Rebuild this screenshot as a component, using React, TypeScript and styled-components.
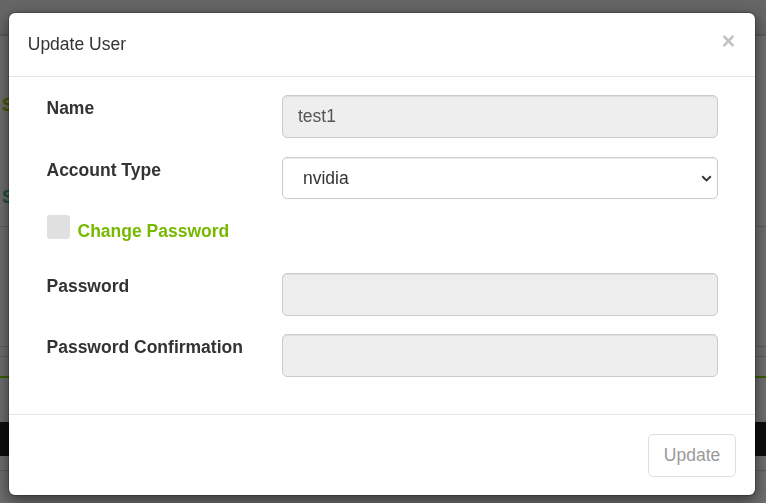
import React from "react";
import styled, { createGlobalStyle } from "styled-components";

const Global = createGlobalStyle`
  html, body { margin: 0; padding: 0; }
  body {
    font-family: "Liberation Sans", Arial, sans-serif;
    overflow: hidden;
    background: #dedede;
  }
  * { box-sizing: border-box; }
`;

/* ---------- page behind the modal ---------- */
const Page = styled.div`
  width: 766px;
  height: 503px;
  display: flex;
  flex-direction: column;
  background: #dedede;
`;
const TopBar = styled.div`
  height: 36px;
  background: #cdcdcd;
  border-bottom: 2px solid #b6b6b6;
  flex: none;
`;
const PageText = styled.div<{ $top: number; $color: string }>`
  margin-top: ${(p) => p.$top}px;
  padding-left: 2px;
  height: 14px;
  font-size: 18px;
  line-height: 14px;
  font-weight: bold;
  color: ${(p) => p.$color};
  flex: none;
`;
const PageLine = styled.div<{ $top: number; $color?: string; $h?: number }>`
  margin-top: ${(p) => p.$top}px;
  height: ${(p) => p.$h ?? 1}px;
  background: ${(p) => p.$color ?? "#b9b9b9"};
  flex: none;
`;

/* ---------- overlay & modal ---------- */
const Overlay = styled.div`
  position: fixed;
  inset: 0;
  background: rgba(0, 0, 0, 0.5);
  padding: 12px 0 0 8px;
`;
const Modal = styled.div`
  width: 748px;
  background: #fff;
  border: 1px solid rgba(0, 0, 0, 0.2);
  border-radius: 7px;
  box-shadow: 0 5px 15px rgba(0, 0, 0, 0.5);
  background-clip: padding-box;
`;
const Header = styled.div`
  padding: 18.75px;
  border-bottom: 1px solid #e5e5e5;
  display: flex;
  align-items: center;
  justify-content: space-between;
`;
const Title = styled.h4`
  margin: 0;
  font-size: 17.5px;
  line-height: 25px;
  font-weight: normal;
  color: #333;
`;
const Close = styled.button`
  border: 0;
  background: transparent;
  padding: 0;
  margin: -5px 1px 0 0;
  font-family: "Liberation Sans", Arial, sans-serif;
  font-size: 23px;
  font-weight: bold;
  line-height: 25px;
  color: #c2c2c2;
  cursor: pointer;
`;
const Body = styled.div`
  padding: 18.75px;
`;
const Row = styled.div`
  display: grid;
  grid-template-columns: 235.5px 1fr;
  padding: 0 18.75px;
  margin-bottom: 18.75px;
`;
const Label = styled.label`
  font-size: 17.5px;
  line-height: 25px;
  font-weight: bold;
  color: #333;
  padding-top: 1px;
`;
const Input = styled.input<{ $disabled?: boolean }>`
  height: 42.5px;
  width: 100%;
  padding: 0 15px;
  font-family: "Liberation Sans", Arial, sans-serif;
  font-size: 17.5px;
  color: #555;
  background: ${(p) => (p.$disabled ? "#eeeeee" : "#fff")};
  border: 1px solid #cccccc;
  border-radius: 5px;
  box-shadow: inset 0 1px 1px rgba(0, 0, 0, 0.075);
  outline: none;
`;
const SelectWrap = styled.div`
  position: relative;
`;
const Select = styled.select`
  appearance: none;
  height: 42.5px;
  width: 100%;
  padding: 0 30px 0 20px;
  font-family: "Liberation Sans", Arial, sans-serif;
  font-size: 17.5px;
  color: #333;
  background: #fff;
  border: 1px solid #cccccc;
  border-radius: 5px;
  box-shadow: inset 0 1px 1px rgba(0, 0, 0, 0.075);
  outline: none;
`;
const Chevron = styled.svg`
  position: absolute;
  right: 6px;
  top: 18px;
  pointer-events: none;
`;
const CheckRow = styled.div`
  display: flex;
  align-items: flex-start;
  gap: 8px;
  padding: 0 18.75px;
  margin: -2.5px 0 29.3px;
`;
const Box = styled.span`
  width: 23px;
  height: 24px;
  border-radius: 3px;
  background: #e0e0e0;
  flex: none;
`;
const CheckLabel = styled.span`
  font-size: 17.5px;
  line-height: 25px;
  font-weight: bold;
  color: #76b900;
  margin-top: 3.7px;
`;
const Footer = styled.div`
  padding: 18.75px;
  border-top: 1px solid #e5e5e5;
  display: flex;
  justify-content: flex-end;
`;
const Button = styled.button`
  height: 42.5px;
  padding: 0 15px;
  font-family: "Liberation Sans", Arial, sans-serif;
  font-size: 17.5px;
  line-height: 25px;
  color: #9a9a9a;
  background: #fff;
  border: 1px solid #dedede;
  border-radius: 5px;
  cursor: not-allowed;
`;

export default function App() {
  return (
    <>
      <Global />
      <Page>
        <TopBar />
        <PageText $top={62} $color="#8fb000">S</PageText>
        <PageText $top={78} $color="#4aa070">S</PageText>
        <PageLine $top={22} />
        <PageLine $top={119} />
        <PageLine $top={9} />
        <PageLine $top={19} $color="#76b900" $h={2} />
        <PageLine $top={44} $color="#1c1c1c" $h={34} />
        <PageLine $top={14} />
      </Page>
      <Overlay>
        <Modal>
          <Header>
            <Title>Update User</Title>
            <Close aria-label="Close">×</Close>
          </Header>
          <Body>
            <Row>
              <Label>Name</Label>
              <Input $disabled disabled value="test1" readOnly />
            </Row>
            <Row>
              <Label>Account Type</Label>
              <SelectWrap>
                <Select defaultValue="nvidia">
                  <option value="nvidia">nvidia</option>
                </Select>
                <Chevron width="11" height="7" viewBox="0 0 11 7">
                  <path d="M1.2 1.2 L5.5 5.4 L9.8 1.2" fill="none" stroke="#333" strokeWidth="1.9" />
                </Chevron>
              </SelectWrap>
            </Row>
            <CheckRow>
              <Box />
              <CheckLabel>Change Password</CheckLabel>
            </CheckRow>
            <Row>
              <Label>Password</Label>
              <Input $disabled disabled type="password" />
            </Row>
            <Row>
              <Label>Password Confirmation</Label>
              <Input $disabled disabled type="password" />
            </Row>
          </Body>
          <Footer>
            <Button disabled>Update</Button>
          </Footer>
        </Modal>
      </Overlay>
    </>
  );
}
